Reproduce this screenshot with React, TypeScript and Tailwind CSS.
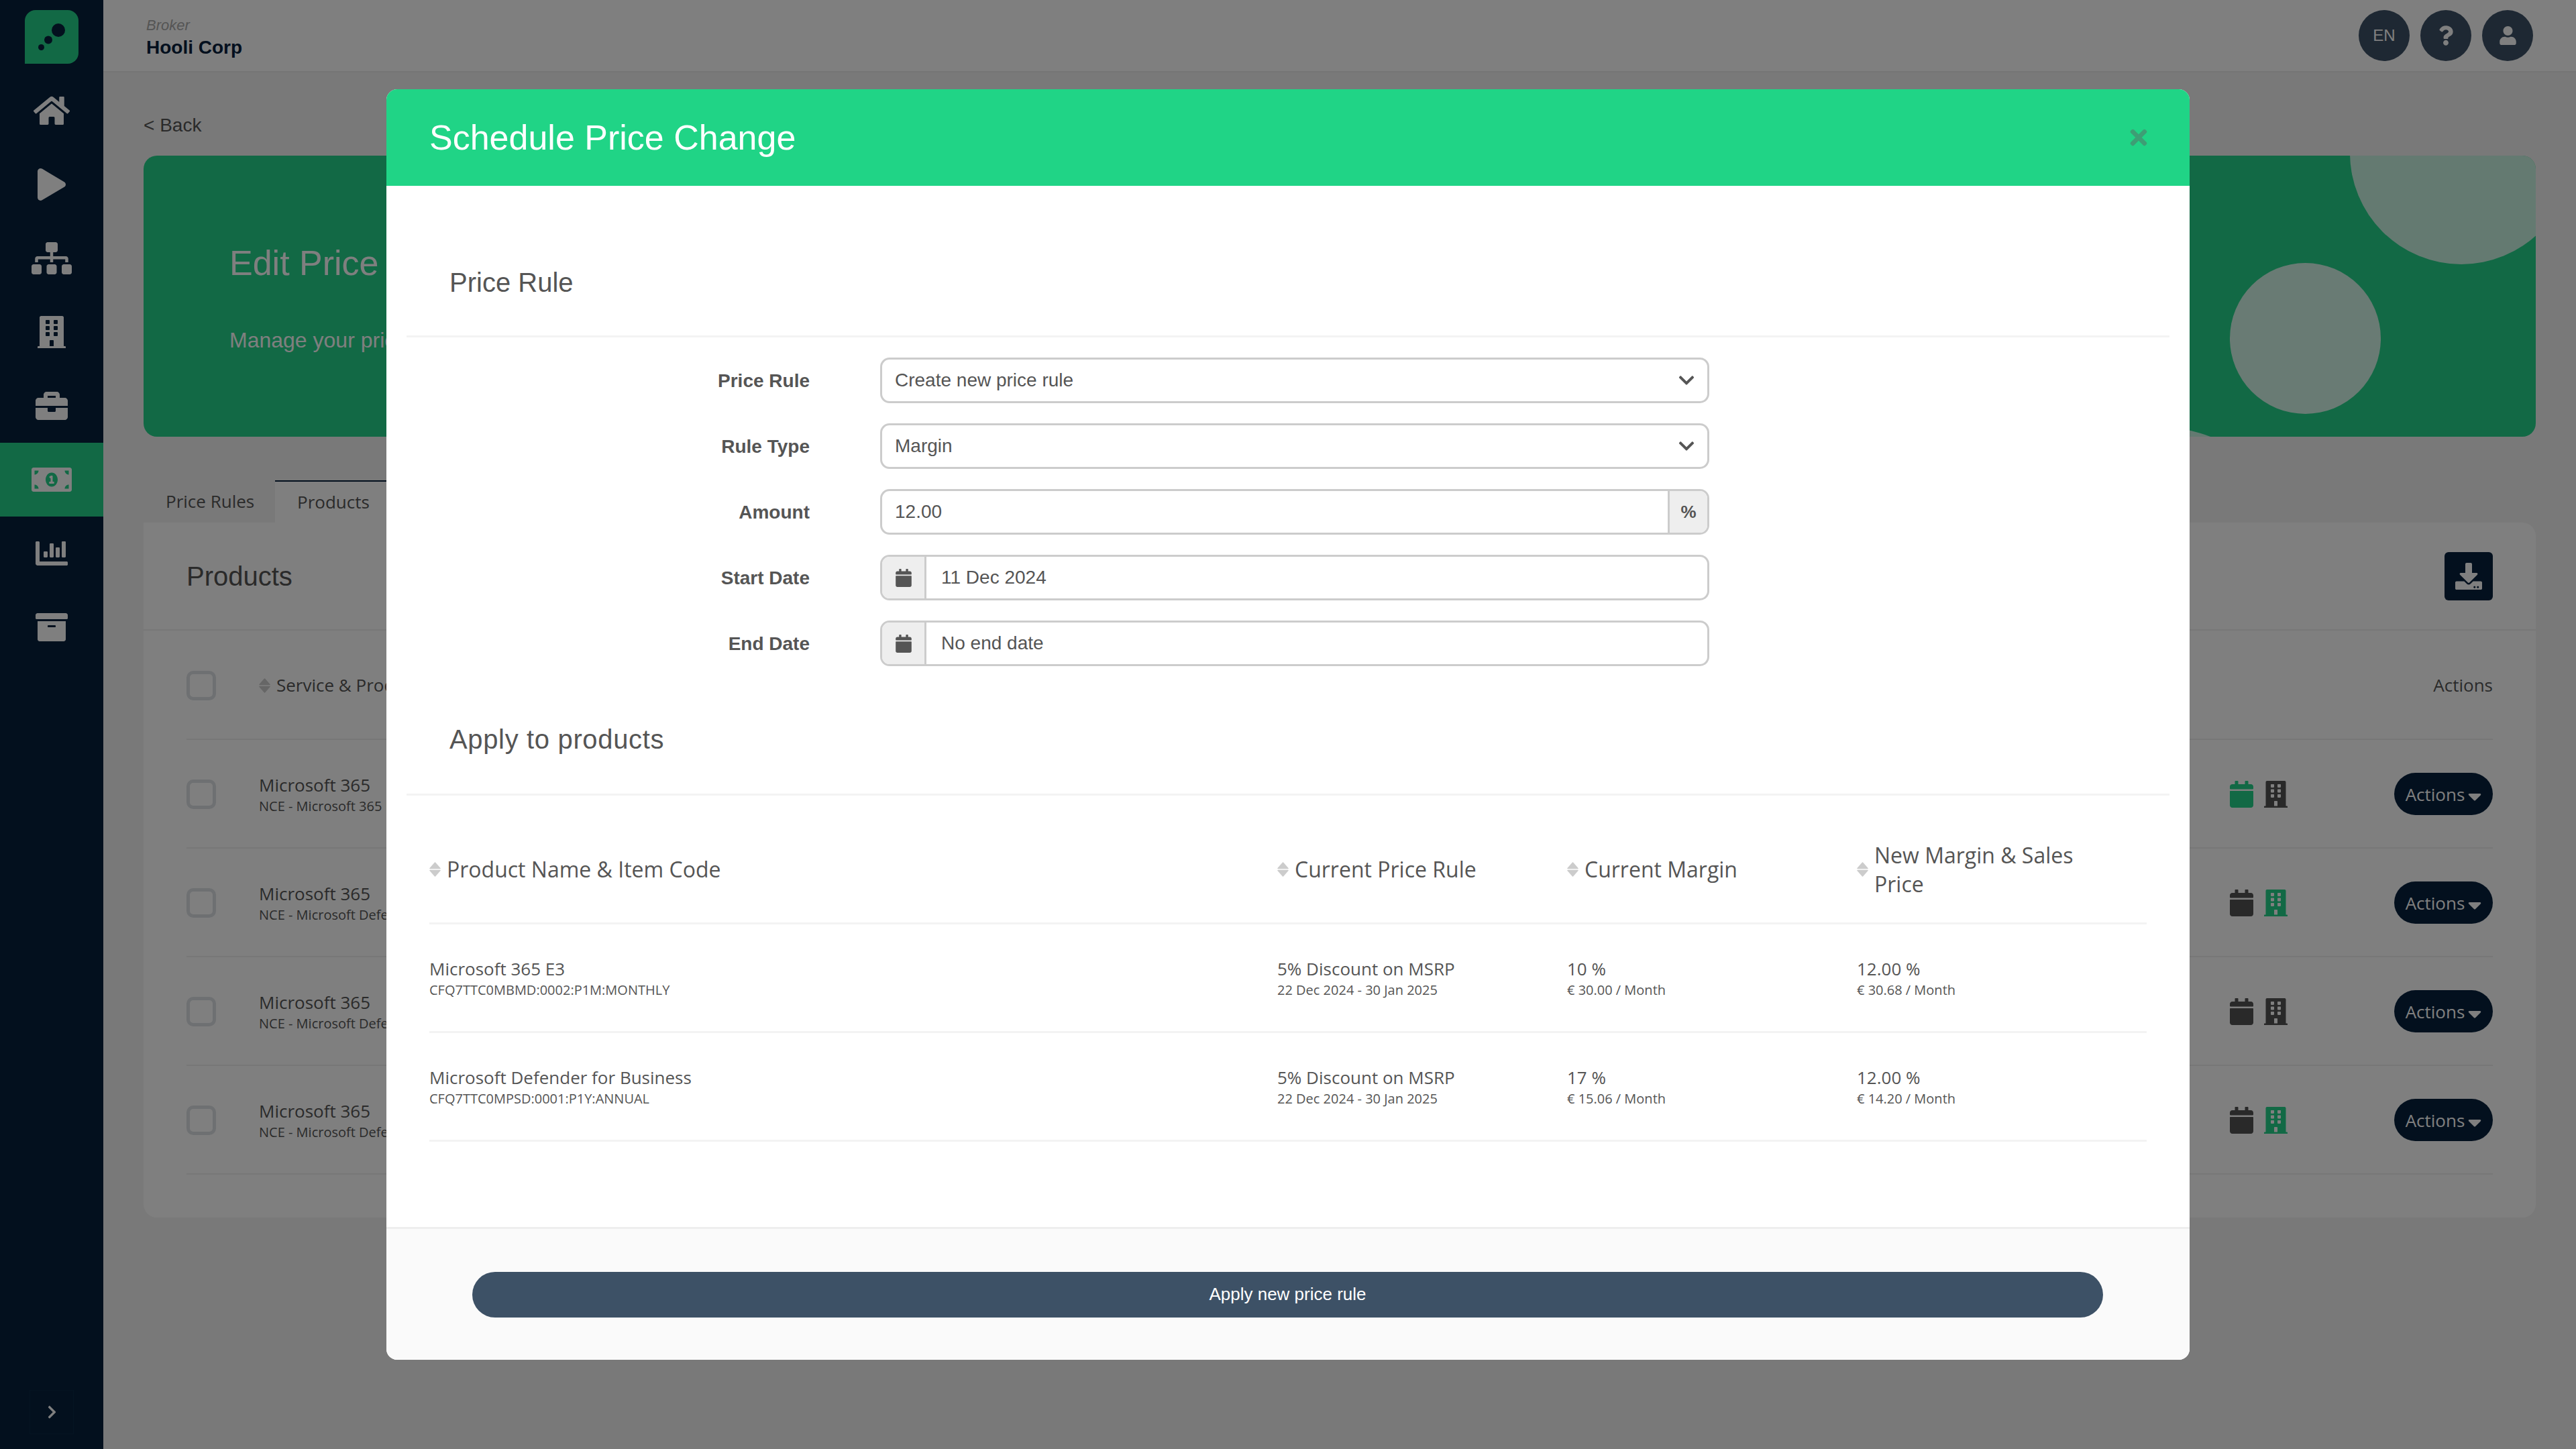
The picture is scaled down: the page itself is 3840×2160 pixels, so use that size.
import React from 'react';
import {
  FaHome, FaPlay, FaSitemap, FaBuilding, FaBriefcase, FaMoneyBillAlt, FaChartBar, FaArchive,
  FaCalendar, FaDownload, FaQuestion, FaUser, FaCaretDown, FaTimes, FaChevronDown, FaChevronRight,
} from 'react-icons/fa';

const navItems = [
  { icon: FaHome, size: 'w-[54px] h-[48px]' },
  { icon: FaPlay, size: 'w-[42px] h-[48px]' },
  { icon: FaSitemap, size: 'w-[60px] h-[48px]' },
  { icon: FaBuilding, size: 'w-[42px] h-[48px]' },
  { icon: FaBriefcase, size: 'w-[48px] h-[48px]' },
  { icon: FaMoneyBillAlt, size: 'w-[60px] h-[48px]', active: true },
  { icon: FaChartBar, size: 'w-[48px] h-[48px]' },
  { icon: FaArchive, size: 'w-[48px] h-[48px]' },
];

const backgroundRows = [
  { sub: 'NCE - Microsoft 365 E3', calendarOn: true, buildingOn: false },
  { sub: 'NCE - Microsoft Defender for Business', calendarOn: false, buildingOn: true },
  { sub: 'NCE - Microsoft Defender for Business', calendarOn: false, buildingOn: false },
  { sub: 'NCE - Microsoft Defender for Business', calendarOn: false, buildingOn: true },
];

const modalRows = [
  {
    name: 'Microsoft 365 E3', code: 'CFQ7TTC0MBMD:0002:P1M:MONTHLY',
    margin: '10 %', price: '€ 30.00 / Month', newPrice: '€ 30.68 / Month',
  },
  {
    name: 'Microsoft Defender for Business', code: 'CFQ7TTC0MPSD:0001:P1Y:ANNUAL',
    margin: '17 %', price: '€ 15.06 / Month', newPrice: '€ 14.20 / Month',
  },
];

const SortIcon = () => (
  <svg viewBox="0 0 17 22" className="w-[17px] h-[22px] shrink-0" fill="#cccccc" stroke="#cccccc" strokeWidth="1.5" strokeLinejoin="round">
    <polygon points="8.5,1 16,9.5 1,9.5" />
    <polygon points="1,12.5 16,12.5 8.5,21" />
  </svg>
);

const Sidebar = () => (
  <aside className="w-[154px] h-full shrink-0 bg-[#06203c] flex flex-col">
    <div className="h-[110px] shrink-0 flex justify-center pt-[15px]">
      <div className="w-[80px] h-[80px] bg-[#24d38a] rounded-[16px] rounded-bl-none flex items-center justify-center">
        <svg viewBox="0 0 80 80" className="w-[80px] h-[80px]" fill="#06203c">
          <ellipse cx="50" cy="30" rx="10" ry="10" />
          <ellipse cx="35" cy="44.5" rx="6" ry="6" />
          <ellipse cx="24.5" cy="55.5" rx="4.5" ry="4.5" />
        </svg>
      </div>
    </div>
    {navItems.map((item, i) => {
      const Icon = item.icon;
      return (
        <div key={i} className={`h-[110px] shrink-0 flex items-center justify-center ${item.active ? 'bg-[#24d38a]' : ''}`}>
          <Icon className={`${item.size} text-white`} />
        </div>
      );
    })}
    <div className="mt-auto mb-[22px] mx-auto w-[66px] h-[66px] border border-[#0a2845] flex items-center justify-center">
      <FaChevronRight className="w-[15px] h-[22px] text-white" />
    </div>
  </aside>
);

const TopBar = () => (
  <header className="h-[108px] shrink-0 bg-white border-b-2 border-[#ebebeb] flex items-center justify-between pl-[64px] pr-[64px]">
    <div className="flex flex-col pt-[7px]">
      <span className="text-[22px] leading-[26px] italic text-[#aaaaaa]">Broker</span>
      <span className="text-[28px] leading-[34px] mt-[3px] font-bold text-[#06203c]">Hooli Corp</span>
    </div>
    <div className="flex gap-[16px] text-white">
      <div className="w-[76px] h-[76px] rounded-full bg-[#3d5166] flex items-center justify-center text-[24px]">EN</div>
      <div className="w-[76px] h-[76px] rounded-full bg-[#3d5166] flex items-center justify-center">
        <FaQuestion className="w-[22px] h-[30px]" />
      </div>
      <div className="w-[76px] h-[76px] rounded-full bg-[#3d5166] flex items-center justify-center">
        <FaUser className="w-[25px] h-[28px]" />
      </div>
    </div>
  </header>
);

const Banner = () => (
  <div className="relative h-[419px] rounded-[20px] bg-[#24d38a] overflow-hidden pl-[128px] pt-[130px]">
    <div className="text-[52px] leading-[60px] text-white">Edit Price Rule</div>
    <div className="mt-[65px] text-[32px] leading-[40px] text-white">Manage your price rules</div>
    <div className="absolute left-[3289px] -top-[170px] w-[332px] h-[332px] rounded-full bg-white/75" />
    <div className="absolute left-[3110px] top-[160px] w-[225px] h-[225px] rounded-full bg-white/80" />
    <div className="absolute left-[2711px] top-[402px] w-[550px] h-[550px] rounded-full bg-white/75" />
  </div>
);

const ProductsCard = () => (
  <div className="bg-white rounded-[20px] rounded-tl-none font-['Open_Sans',sans-serif] text-[#555555] h-[1036px]">
    <div className="h-[161px] border-b-2 border-[#eeeeee] flex items-center justify-between pl-[64px] pr-[64px]">
      <h2 className="text-[40px] font-['Liberation_Sans',sans-serif] font-normal">Products</h2>
      <button className="w-[72px] h-[72px] rounded-[6px] bg-[#06203c] flex items-center justify-center text-white">
        <FaDownload className="w-[40px] h-[40px]" />
      </button>
    </div>
    <div className="px-[64px]">
      <div className="h-[163px] border-b-2 border-[#eeeeee] flex items-center pt-[2px]">
        <div className="w-[44px] h-[44px] rounded-[10px] border-[5px] border-[#dde1e5]" />
        <div className="ml-[64px] flex items-center gap-[9px] text-[26px]">
          <SortIcon />
          <span>Service &amp; Product</span>
        </div>
        <span className="ml-auto text-[26px]">Actions</span>
      </div>
      {backgroundRows.map((row, i) => (
        <div key={i} className="h-[162px] border-b-2 border-[#eeeeee] flex items-center pt-[1px]">
          <div className="w-[44px] h-[44px] rounded-[10px] border-[5px] border-[#dde1e5]" />
          <div className="ml-[64px] flex-1 flex flex-col">
            <span className="text-[26px] leading-[36px]">Microsoft 365</span>
            <span className="text-[20px] leading-[28px]">{row.sub}</span>
          </div>
          <div className="flex gap-[16px] mr-[159px]">
            <FaCalendar className={`w-[35px] h-[40px] ${row.calendarOn ? 'text-[#24d38a]' : 'text-[#525252]'}`} />
            <FaBuilding className={`w-[35px] h-[40px] ${row.buildingOn ? 'text-[#24d38a]' : 'text-[#525252]'}`} />
          </div>
          <button className="w-[147px] h-[63px] rounded-full bg-[#06203c] text-white text-[26px] flex items-center justify-center gap-[5px] pt-[2px]">
            Actions
            <FaCaretDown className="w-[20px] h-[32px] mt-[4px]" />
          </button>
        </div>
      ))}
    </div>
  </div>
);

const FormRow = ({ label, children }: { label: string; children: React.ReactNode }) => (
  <div className="flex items-center h-[68px]">
    <label className="w-[601px] text-right font-bold text-[28px] pt-[2px]">{label}</label>
    <div className="ml-[105px] w-[1236px] h-[68px]">{children}</div>
  </div>
);

const SelectBox = ({ value }: { value: string }) => (
  <div className="h-full rounded-[14px] border-[3px] border-[#cccccc] flex items-center justify-between pl-[19px] pr-[18px]">
    <span>{value}</span>
    <FaChevronDown className="w-[26px] h-[26px]" />
  </div>
);

const DateBox = ({ value }: { value: string }) => (
  <div className="h-full rounded-[14px] border-[3px] border-[#cccccc] flex items-center overflow-hidden">
    <div className="w-[66px] h-full bg-[#eeeeee] border-r-[3px] border-[#cccccc] flex items-center justify-center">
      <FaCalendar className="w-[24px] h-[27px]" />
    </div>
    <span className="ml-[22px]">{value}</span>
  </div>
);

const PriceModal = () => (
  <div className="w-[2688px] h-[1894px] bg-white rounded-[16px] overflow-hidden flex flex-col font-['Liberation_Sans',sans-serif] text-[#555555]">
    <div className="h-[144px] shrink-0 bg-[#20d486] flex items-center justify-between pl-[64px] pr-[58px]">
      <h1 className="text-[52px] font-normal text-white">Schedule Price Change</h1>
      <FaTimes className="w-[36px] h-[36px] text-[#3d9e75]" />
    </div>
    <div className="flex-1 px-[30px]">
      <div className="h-[226px] border-b-[3px] border-[#f3f3f3] pt-[114px] pl-[64px]">
        <h3 className="text-[40px] leading-[60px] font-normal">Price Rule</h3>
      </div>
      <div className="mt-[30px] flex flex-col gap-[30px] text-[28px]">
        <FormRow label="Price Rule"><SelectBox value="Create new price rule" /></FormRow>
        <FormRow label="Rule Type"><SelectBox value="Margin" /></FormRow>
        <FormRow label="Amount">
          <div className="h-full rounded-[14px] border-[3px] border-[#cccccc] flex items-center justify-between overflow-hidden pl-[19px]">
            <span>12.00</span>
            <div className="w-[59px] h-full bg-[#eeeeee] border-l-[3px] border-[#cccccc] flex items-center justify-center font-bold text-[26px]">%</div>
          </div>
        </FormRow>
        <FormRow label="Start Date"><DateBox value="11 Dec 2024" /></FormRow>
        <FormRow label="End Date"><DateBox value="No end date" /></FormRow>
      </div>
      <div className="mt-[79px] h-[114px] border-b-[3px] border-[#f3f3f3] pl-[64px]">
        <h3 className="text-[40px] leading-[60px] font-normal tracking-[0.65px]">Apply to products</h3>
      </div>
      <div className="mt-[30px] mx-[34px] font-['Open_Sans',sans-serif]">
        <div className="grid grid-cols-[1264px_432px_432px_432px] items-center h-[162px] border-b-[3px] border-[#f3f3f3] text-[32px]">
          <div className="flex items-center gap-[9px]"><SortIcon /><span>Product Name &amp; Item Code</span></div>
          <div className="flex items-center gap-[9px]"><SortIcon /><span>Current Price Rule</span></div>
          <div className="flex items-center gap-[9px]"><SortIcon /><span>Current Margin</span></div>
          <div className="flex items-center gap-[9px]"><SortIcon /><span className="leading-[43px] w-[340px]">New Margin &amp; Sales Price</span></div>
        </div>
        {modalRows.map((row) => (
          <div key={row.code} className="grid grid-cols-[1264px_432px_432px_432px] items-center h-[162px] border-b-[3px] border-[#f3f3f3]">
            <div className="flex flex-col">
              <span className="text-[26px] leading-[36px]">{row.name}</span>
              <span className="text-[20px] leading-[28px]">{row.code}</span>
            </div>
            <div className="flex flex-col">
              <span className="text-[26px] leading-[36px]">5% Discount on MSRP</span>
              <span className="text-[20px] leading-[28px]">22 Dec 2024 - 30 Jan 2025</span>
            </div>
            <div className="flex flex-col">
              <span className="text-[26px] leading-[36px]">{row.margin}</span>
              <span className="text-[20px] leading-[28px]">{row.price}</span>
            </div>
            <div className="flex flex-col">
              <span className="text-[26px] leading-[36px]">12.00 %</span>
              <span className="text-[20px] leading-[28px]">{row.newPrice}</span>
            </div>
          </div>
        ))}
      </div>
    </div>
    <div className="h-[198px] shrink-0 bg-[#fafafa] border-t-[3px] border-[#eeeeee] flex items-center justify-center">
      <button className="w-[2431px] h-[68px] rounded-full bg-[#3d5166] text-white text-[26px] -ml-[1px]">Apply new price rule</button>
    </div>
  </div>
);

export default function App() {
  return (
    <div className="relative w-[3840px] h-[2160px] overflow-hidden flex bg-[#f2f2f2] font-['Liberation_Sans',sans-serif]">
      <Sidebar />
      <main className="flex-1 flex flex-col min-w-0">
        <TopBar />
        <div className="px-[60px]">
          <div className="h-[124px] flex items-center text-[28px] text-[#555555] pt-[34px]">&lt; Back</div>
          <Banner />
          <div className="mt-[65px] h-[63px] flex text-[26px] text-[#555555] font-['Open_Sans',sans-serif]">
            <div className="w-[196px] flex items-center pl-[33px]">Price Rules</div>
            <div className="w-[400px] bg-white border-t-2 border-[#06203c] flex items-center pl-[33px]">Products</div>
          </div>
          <ProductsCard />
        </div>
      </main>
      <div className="absolute inset-0 bg-black/50 flex justify-center pt-[133px]">
        <PriceModal />
      </div>
    </div>
  );
}
